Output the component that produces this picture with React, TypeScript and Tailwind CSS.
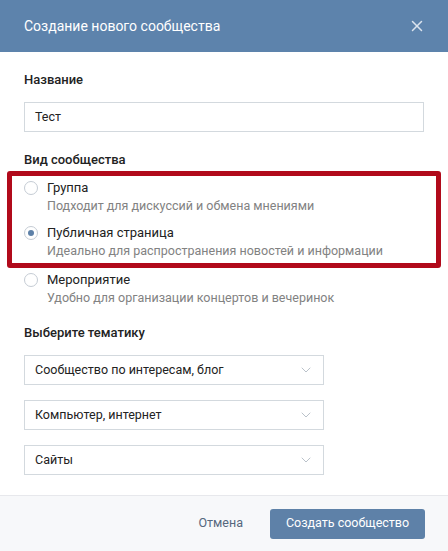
import { ChevronDown, X } from 'lucide-react';

const types = [
  { title: 'Группа', desc: 'Подходит для дискуссий и обмена мнениями', checked: false },
  { title: 'Публичная страница', desc: 'Идеально для распространения новостей и информации', checked: true },
  { title: 'Мероприятие', desc: 'Удобно для организации концертов и вечеринок', checked: false },
];

const topics = ['Сообщество по интересам, блог', 'Компьютер, интернет', 'Сайты'];

function Radio({ title, desc, checked }: { title: string; desc: string; checked: boolean }) {
  return (
    <div className="flex gap-[9px]">
      <div className="mt-[2px] flex h-[14px] w-[14px] shrink-0 items-center justify-center rounded-full border border-[#c5ccd4] bg-white">
        {checked && <div className="h-[6px] w-[6px] rounded-full bg-[#5e81a8]" />}
      </div>
      <div>
        <div className="text-[13px] leading-[18px] text-[#222]">{title}</div>
        <div className="text-[12.5px] leading-[17px] text-[#828282]">{desc}</div>
      </div>
    </div>
  );
}

export default function App() {
  return (
    <div className="h-[551px] w-[448px] bg-white font-['Roboto',sans-serif] flex flex-col">
      {/* Header */}
      <div className="flex h-[52px] shrink-0 items-center justify-between bg-[#5d83ac] pl-[24px] pr-[22px]">
        <span className="text-[14px] text-white">Создание нового сообщества</span>
        <X size={18} strokeWidth={2} className="text-[#dbe4ee]" />
      </div>

      <div className="flex-1 px-[24px] pt-[19px]">
        <div className="text-[13px] font-medium leading-[18px] text-[#222]">Название</div>
        <div className="mt-[13px] flex h-[30px] items-center border border-[#d3d9de] px-[10px] text-[12.5px] text-[#222]">
          Тест
        </div>

        <div className="mt-[19px] text-[13px] font-medium leading-[18px] text-[#222]">Вид сообщества</div>

        <div className="-mx-[17px] mt-[2px] rounded-[3px] border-[5px] border-[#b10a1b] px-[12px] pb-[4px] pt-[3px]">
          <div className="flex flex-col gap-[10px]">
            <Radio {...types[0]} />
            <Radio {...types[1]} />
          </div>
        </div>
        <div className="mt-[3px]">
          <Radio {...types[2]} />
        </div>

        <div className="mt-[18px] text-[13px] font-medium leading-[18px] text-[#222]">Выберите тематику</div>
        <div className="mt-[13px] flex flex-col gap-[15px]">
          {topics.map((t) => (
            <div
              key={t}
              className="flex h-[30px] w-[300px] items-center justify-between border border-[#d3d9de] pl-[10px] pr-[9px] text-[12.5px] text-[#222]"
            >
              <span>{t}</span>
              <ChevronDown size={16} strokeWidth={1.2} className="text-[#a8b2bd]" />
            </div>
          ))}
        </div>
      </div>

      {/* Footer */}
      <div className="flex h-[56px] shrink-0 items-center justify-end gap-[27px] border-t border-[#e7e8ec] bg-[#f7f8fa] pr-[23px]">
        <span className="text-[12.5px] text-[#55677d]">Отмена</span>
        <div className="flex h-[30px] w-[155px] items-center justify-center rounded-[3px] bg-[#5e81a8] text-[12.5px] text-white">
          Создать сообщество
        </div>
      </div>
    </div>
  );
}
